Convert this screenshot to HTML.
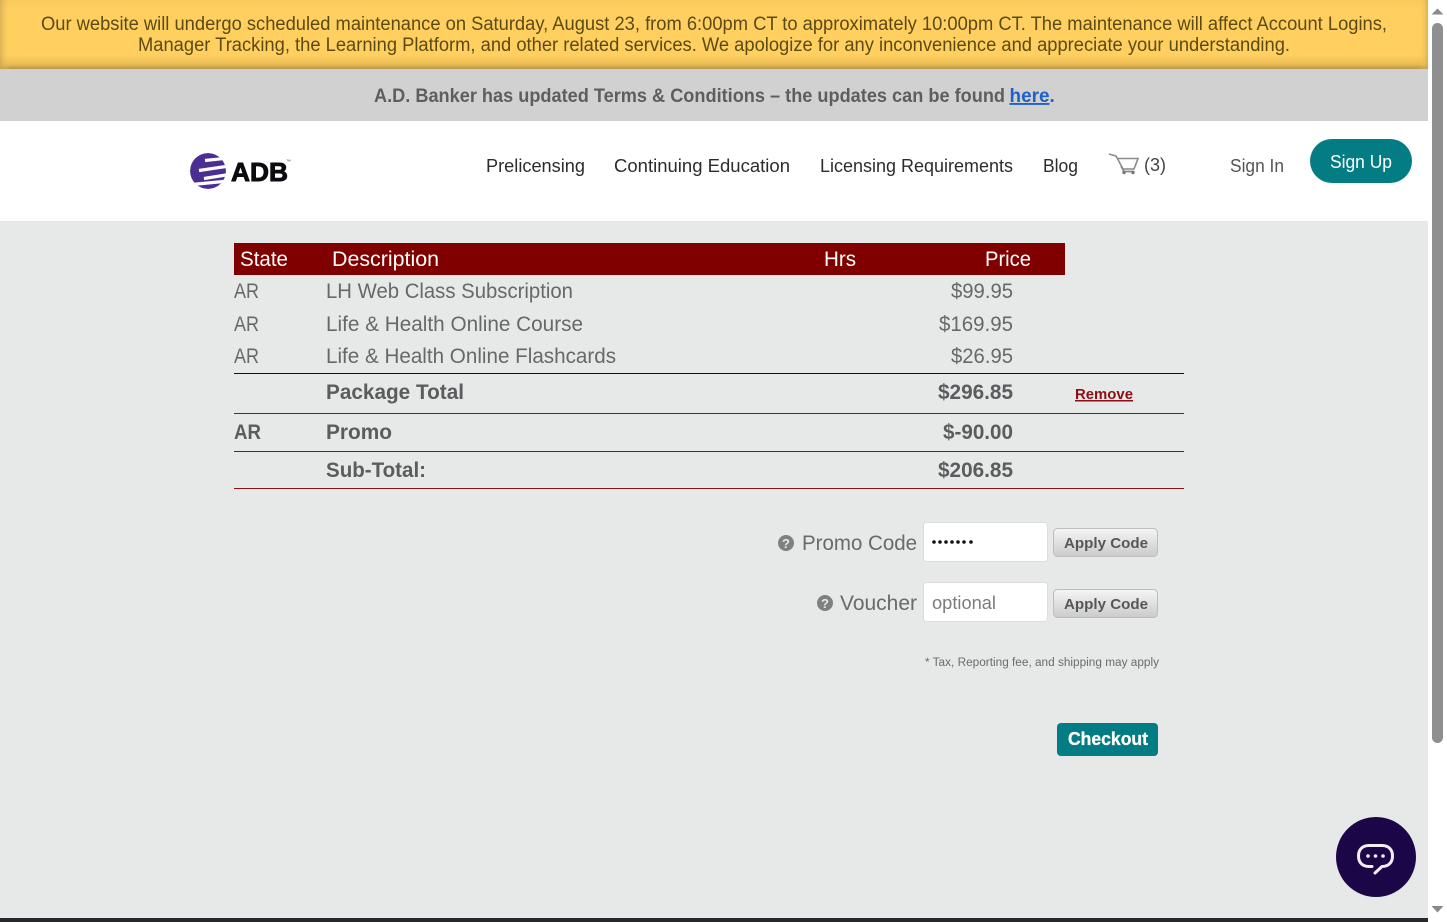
<!DOCTYPE html>
<html lang="en"><head><meta charset="utf-8"><title>Cart</title>
<style>
html,body{margin:0;padding:0;width:1447px;height:922px;overflow:hidden;background:#fff}
svg{position:absolute;left:0;top:0;display:block}
text{font-family:"Liberation Sans",Arial,sans-serif;white-space:pre}
</style></head><body>
<svg width="1447" height="922" viewBox="0 0 1447 922" xmlns="http://www.w3.org/2000/svg">
<defs>
<linearGradient id="yv" x1="0" y1="0" x2="0" y2="1"><stop offset="0" stop-color="#f7c95c"/><stop offset=".12" stop-color="#ffd05f"/><stop offset=".8" stop-color="#ffd05f"/><stop offset=".93" stop-color="#e9bc55"/><stop offset="1" stop-color="#b7964a"/></linearGradient>
<linearGradient id="yl" x1="0" y1="0" x2="1" y2="0"><stop offset="0" stop-color="#c9a550" stop-opacity=".7"/><stop offset=".007" stop-color="#ffd05f" stop-opacity="0"/><stop offset=".994" stop-color="#ffd05f" stop-opacity="0"/><stop offset="1" stop-color="#c9a550" stop-opacity=".7"/></linearGradient>
<linearGradient id="btn" x1="0" y1="0" x2="0" y2="1"><stop offset="0" stop-color="#f5f5f5"/><stop offset="1" stop-color="#cbcbcb"/></linearGradient>
<clipPath id="globe"><circle cx="208" cy="171" r="18"/></clipPath>
</defs>
<rect width="1447" height="922" fill="#fff"/>
<rect x="0" y="221" width="1428" height="701" fill="#e6e9e8"/>
<rect x="0" y="69" width="1428" height="52" fill="#d1d1d2"/>
<rect x="0" y="0" width="1428" height="69" fill="url(#yv)"/>
<rect x="0" y="0" width="1428" height="69" fill="url(#yl)"/>
<rect x="0" y="918" width="1428" height="4" fill="#26282a"/>

<g fill="#5c4a14" font-size="19">
<text x="41" y="30" textLength="1346" lengthAdjust="spacingAndGlyphs">Our website will undergo scheduled maintenance on Saturday, August 23, from 6:00pm CT to approximately 10:00pm CT. The maintenance will affect Account Logins,</text>
<text x="138" y="51" textLength="1152" lengthAdjust="spacingAndGlyphs">Manager Tracking, the Learning Platform, and other related services. We apologize for any inconvenience and appreciate your understanding.</text>
</g>
<g font-size="19" font-weight="700" fill="#5c5e60">
<text x="374" y="102" textLength="631" lengthAdjust="spacingAndGlyphs">A.D. Banker has updated Terms &amp; Conditions – the updates can be found</text>
<text x="1009.500" y="102" textLength="40" lengthAdjust="spacingAndGlyphs" fill="#1f62c9" text-decoration="underline">here</text>
<text x="1049.500" y="102" fill="#1f62c9">.</text>
</g>

<g clip-path="url(#globe)">
<circle cx="208" cy="171" r="18" fill="#4b2e91"/>
<path d="M205 160.500L229 158M199 170.500L229 166M204 178.500L229 174.500M192 184.500L229 181" stroke="#fff" stroke-width="3.200" fill="none"/>
</g>
<text x="231" y="181" font-size="26" font-weight="700" fill="#0b0b0f" stroke="#0b0b0f" stroke-width=".9" textLength="57" lengthAdjust="spacingAndGlyphs">ADB</text>
<text x="286" y="163" font-size="5" fill="#555">™</text>

<g font-size="18" fill="#2c2c2c">
<text x="486" y="172" textLength="99" lengthAdjust="spacingAndGlyphs">Prelicensing</text>
<text x="614" y="172" textLength="176" lengthAdjust="spacingAndGlyphs">Continuing Education</text>
<text x="820" y="172" textLength="193" lengthAdjust="spacingAndGlyphs">Licensing Requirements</text>
<text x="1043" y="172" textLength="35" lengthAdjust="spacingAndGlyphs">Blog</text>
<text x="1144" y="171" textLength="22" lengthAdjust="spacingAndGlyphs" fill="#444">(3)</text>
<text x="1230" y="172" textLength="54" lengthAdjust="spacingAndGlyphs" fill="#555">Sign In</text>
</g>
<path d="M1109 154L1116 156L1123 169H1134L1138 158.500H1118" fill="none" stroke="#8a8a8a" stroke-width="1.600"/>
<path d="M1121 166L1124 171.500H1134" fill="none" stroke="#8a8a8a" stroke-width="1.800"/>
<circle cx="1124" cy="172.500" r="1.700" fill="#777"/><circle cx="1133" cy="172.500" r="1.700" fill="#777"/>
<rect x="1310" y="139" width="102" height="44" rx="22" fill="#037d83"/>
<text x="1330" y="168" font-size="18" fill="#fff" textLength="62" lengthAdjust="spacingAndGlyphs">Sign Up</text>

<rect x="234" y="243" width="831" height="32" fill="#800000"/>
<g font-size="21" fill="#fff">
<text x="240" y="266" textLength="48" lengthAdjust="spacingAndGlyphs">State</text>
<text x="332" y="266" textLength="107" lengthAdjust="spacingAndGlyphs">Description</text>
<text x="824" y="266" textLength="32" lengthAdjust="spacingAndGlyphs">Hrs</text>
<text x="985" y="266" textLength="46" lengthAdjust="spacingAndGlyphs">Price</text>
</g>
<g font-size="21" fill="#66696a">
<text x="234" y="298" textLength="25" lengthAdjust="spacingAndGlyphs">AR</text>
<text x="326" y="298" textLength="247" lengthAdjust="spacingAndGlyphs">LH Web Class Subscription</text>
<text x="951" y="298" textLength="62" lengthAdjust="spacingAndGlyphs">$99.95</text>
<text x="234" y="331" textLength="25" lengthAdjust="spacingAndGlyphs">AR</text>
<text x="326" y="331" textLength="257" lengthAdjust="spacingAndGlyphs">Life &amp; Health Online Course</text>
<text x="939" y="331" textLength="74" lengthAdjust="spacingAndGlyphs">$169.95</text>
<text x="234" y="363" textLength="25" lengthAdjust="spacingAndGlyphs">AR</text>
<text x="326" y="363" textLength="290" lengthAdjust="spacingAndGlyphs">Life &amp; Health Online Flashcards</text>
<text x="951" y="363" textLength="62" lengthAdjust="spacingAndGlyphs">$26.95</text>
</g>
<rect x="234" y="373" width="950" height="1" fill="#111"/>
<rect x="234" y="413" width="950" height="1" fill="#8a1212"/>
<rect x="234" y="451" width="950" height="1" fill="#8a1212"/>
<rect x="234" y="488" width="950" height="1" fill="#8a1414"/>
<g font-size="21" font-weight="700" fill="#5a5d5e">
<text x="326" y="399" textLength="138" lengthAdjust="spacingAndGlyphs">Package Total</text>
<text x="938" y="399" textLength="75" lengthAdjust="spacingAndGlyphs">$296.85</text>
<text x="234" y="439" textLength="27" lengthAdjust="spacingAndGlyphs">AR</text>
<text x="326" y="439" textLength="66" lengthAdjust="spacingAndGlyphs">Promo</text>
<text x="943" y="439" textLength="70" lengthAdjust="spacingAndGlyphs">$-90.00</text>
<text x="326" y="477" textLength="100" lengthAdjust="spacingAndGlyphs">Sub-Total:</text>
<text x="938" y="477" textLength="75" lengthAdjust="spacingAndGlyphs">$206.85</text>
</g>
<text x="1075" y="399" font-size="15" font-weight="700" fill="#8b0f14" text-decoration="underline" textLength="58" lengthAdjust="spacingAndGlyphs">Remove</text>

<circle cx="786" cy="543" r="8" fill="#7f8181"/>
<text x="786" y="548" font-size="13" font-weight="700" fill="#e6e9e8" text-anchor="middle">?</text>
<text x="802" y="550" font-size="21" fill="#686b6c" textLength="115" lengthAdjust="spacingAndGlyphs">Promo Code</text>
<rect x="923.500" y="522.500" width="124" height="39" rx="3" fill="#fff" stroke="#dcdede"/>
<g fill="#111"><circle cx="934" cy="542" r="1.800"/><circle cx="940" cy="542" r="1.800"/><circle cx="946" cy="542" r="1.800"/><circle cx="952" cy="542" r="1.800"/><circle cx="958" cy="542" r="1.800"/><circle cx="964" cy="542" r="1.800"/><circle cx="971" cy="542" r="1.800"/></g>
<rect x="1053.500" y="528.500" width="104" height="28" rx="4" fill="url(#btn)" stroke="#bdbdbd"/>
<text x="1064" y="548" font-size="15" font-weight="700" fill="#555859" textLength="84" lengthAdjust="spacingAndGlyphs">Apply Code</text>

<circle cx="825" cy="603" r="8" fill="#7f8181"/>
<text x="825" y="608" font-size="13" font-weight="700" fill="#e6e9e8" text-anchor="middle">?</text>
<text x="840" y="610" font-size="21" fill="#686b6c" textLength="77" lengthAdjust="spacingAndGlyphs">Voucher</text>
<rect x="923.500" y="582.500" width="124" height="39" rx="3" fill="#fff" stroke="#dcdede"/>
<text x="932" y="609" font-size="18" fill="#7a7c7d" textLength="64" lengthAdjust="spacingAndGlyphs">optional</text>
<rect x="1053.500" y="589.500" width="104" height="28" rx="4" fill="url(#btn)" stroke="#bdbdbd"/>
<text x="1064" y="609" font-size="15" font-weight="700" fill="#555859" textLength="84" lengthAdjust="spacingAndGlyphs">Apply Code</text>

<text x="925" y="666" font-size="11.500" fill="#6a6d6e" textLength="234" lengthAdjust="spacingAndGlyphs">* Tax, Reporting fee, and shipping may apply</text>

<rect x="1057" y="723" width="101" height="33" rx="4" fill="#037d83"/>
<text x="1068" y="745" font-size="18" font-weight="700" fill="#fff" stroke="#fff" stroke-width=".3" textLength="80" lengthAdjust="spacingAndGlyphs">Checkout</text>

<circle cx="1376" cy="857" r="40" fill="#1b0747"/>
<path d="M1372 866.500H1369C1362 866.500 1358.500 862 1358.500 856C1358.500 850 1362 845.500 1369 845.500H1382C1389 845.500 1392.500 850 1392.500 856C1392.500 862 1389 866.500 1382 866.500L1375 873" fill="none" stroke="#f4eef6" stroke-width="3" stroke-linecap="round" stroke-linejoin="round"/>
<circle cx="1368" cy="856" r="1.800" fill="#f4eef6"/><circle cx="1375.500" cy="856" r="1.800" fill="#f4eef6"/><circle cx="1383" cy="856" r="1.800" fill="#f4eef6"/>

<rect x="1428" y="0" width="19" height="922" fill="#fff"/>
<rect x="1432" y="23" width="11" height="720" rx="5.500" fill="#8f8f90"/>
<path d="M1431.500 14.500L1437.500 8.500L1443.500 14.500Z" fill="#8a8a8a"/>
<path d="M1431.500 906L1437.500 912.500L1443.500 906Z" fill="#8a8a8a"/>
</svg>
</body></html>
